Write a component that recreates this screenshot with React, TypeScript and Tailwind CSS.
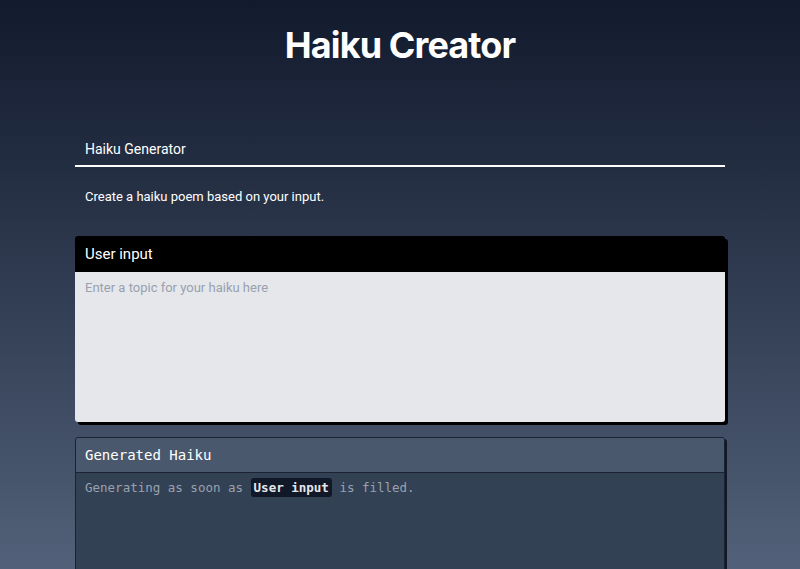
import React, { useState } from 'react';

export default function App() {
  const [topic, setTopic] = useState('');

  return (
    <div className="min-h-screen bg-gradient-to-b from-[#121a2d] to-[#53627a] font-['Roboto',sans-serif] text-white">
      <h1 className="pt-[25px] text-center font-['Inter',sans-serif] text-[36px] font-bold leading-10 tracking-tight">Haiku Creator</h1>

      <div className="mx-auto mt-[74px] w-[650px]">
        <div className="border-b-2 border-white px-[10px] pb-[6px] text-sm leading-5">Haiku Generator</div>
        <p className="px-[10px] pt-[20px] text-[13px] leading-5">Create a haiku poem based on your input.</p>

        <div className="mt-[29px] overflow-hidden rounded-[3px] shadow-[3px_3px_0_0_#000]">
          <div className="bg-black px-[10px] text-[15px] leading-9">User input</div>
          <textarea
            value={topic}
            onChange={e => setTopic(e.target.value)}
            placeholder="Enter a topic for your haiku here"
            className="block h-[150px] w-full resize-none bg-[#e5e7eb] px-[10px] py-[6px] text-[13px] leading-5 text-gray-800 outline-none placeholder:text-gray-400"
          />
        </div>

        <div className="mt-[15px] h-[140px] overflow-hidden rounded-[3px] border border-[#1a2233] bg-[#334155] font-['DejaVu_Sans_Mono',monospace] shadow-[2px_2px_0_0_#111827]">
          <div className="border-b border-[#1a2233] bg-[#4a586d] px-[9px] text-[14px] leading-[34px] text-white">Generated Haiku</div>
          <p className="px-[9px] pt-[5px] text-[12.5px] leading-5 text-gray-400">
            Generating as soon as{' '}
            <span className="rounded-[3px] bg-[#111827] px-[3px] py-[2px] font-bold text-gray-200">User input</span>{' '}
            is filled.
          </p>
        </div>
      </div>
    </div>
  );
}
